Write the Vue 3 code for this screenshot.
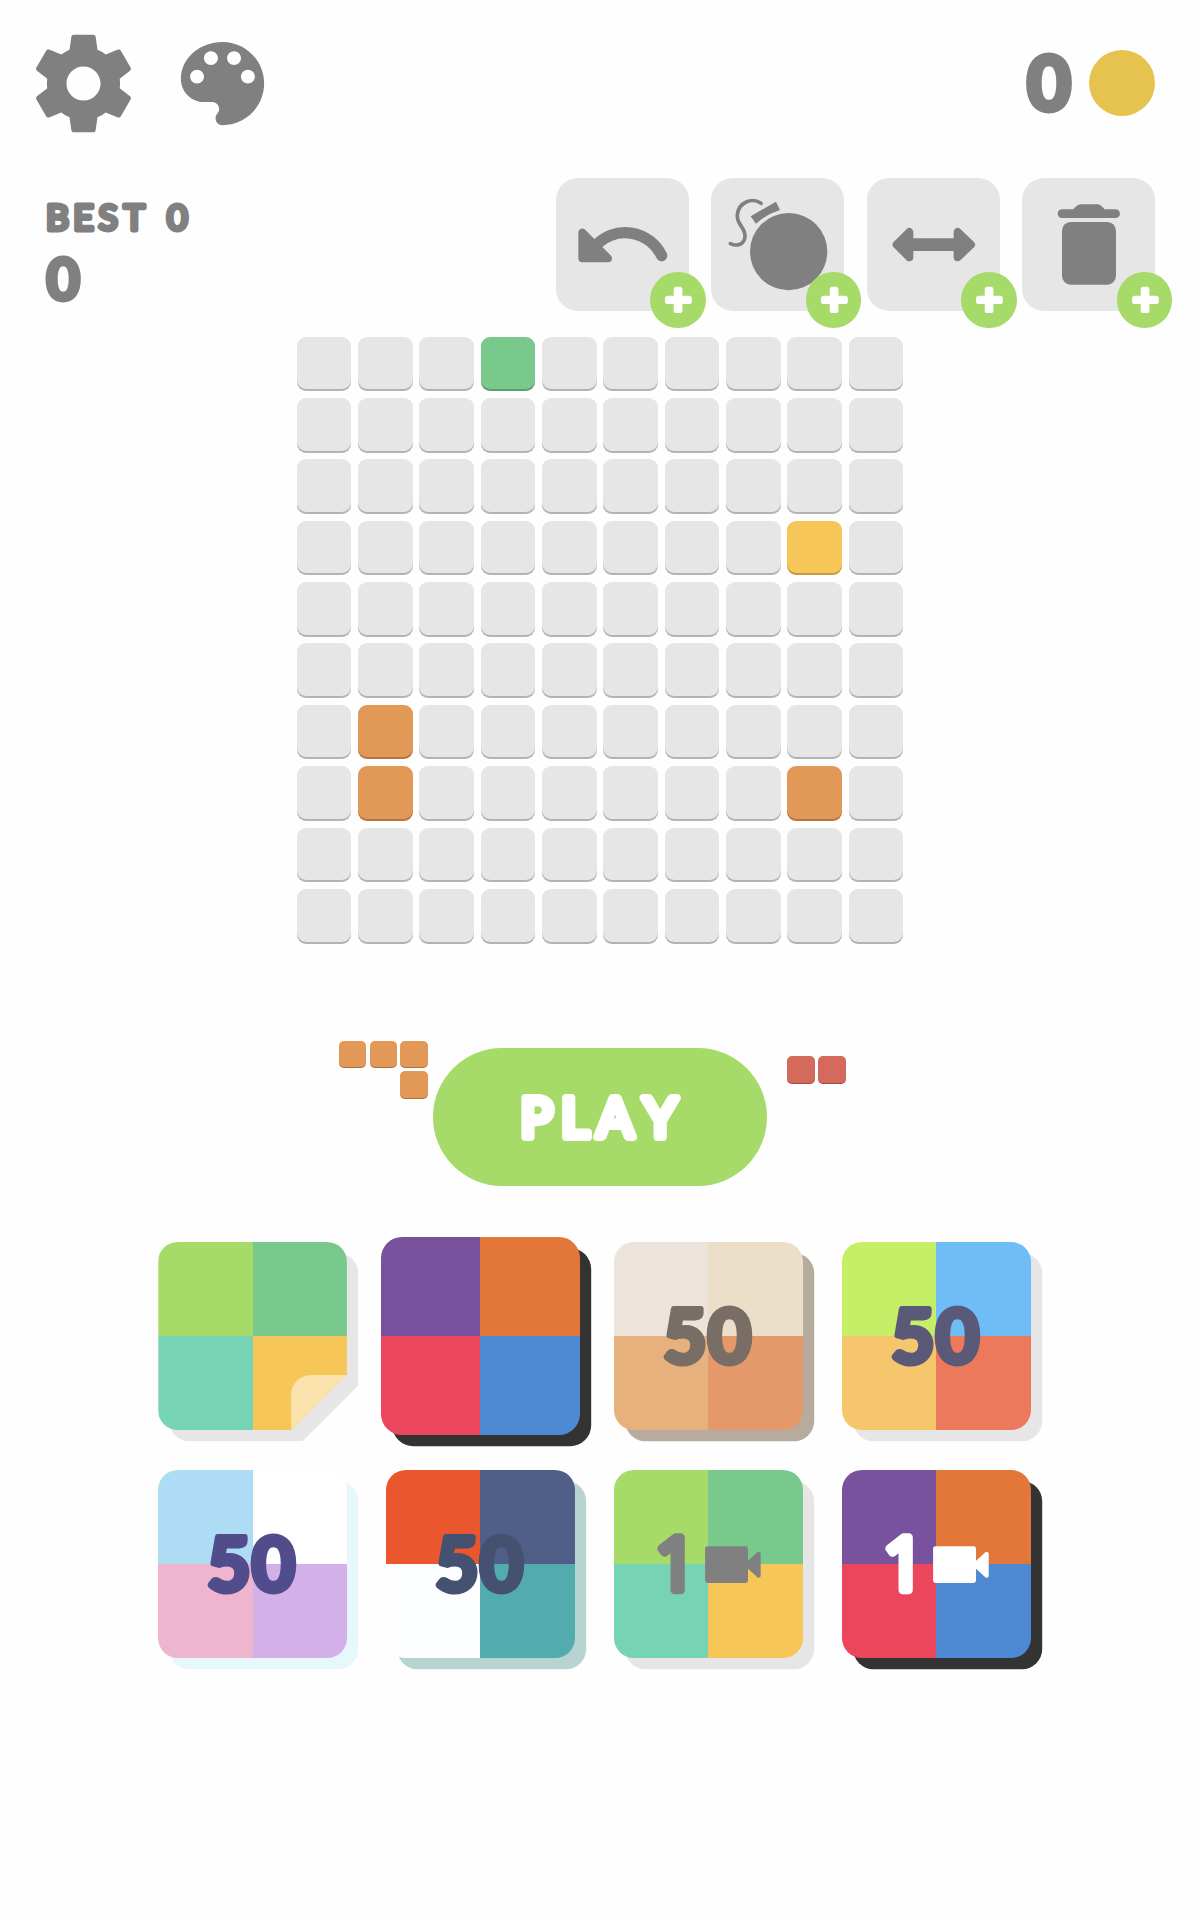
<script setup>
const tools = ['undo', 'bomb', 'swap', 'trash']

const filled = {
  '0-3': 'green',
  '3-8': 'yellow',
  '6-1': 'orange',
  '7-1': 'orange',
  '7-8': 'orange',
}

const cells = []
for (let row = 0; row < 10; row++) {
  for (let col = 0; col < 10; col++) {
    cells.push({ id: `${row}-${col}`, color: filled[`${row}-${col}`] || 'empty' })
  }
}

const classic = ['#a6da69', '#79c98c', '#76d3b3', '#f6c758']
const dark = ['#78529c', '#e37739', '#eb465c', '#4e8ad3']

const themes = [
  { id: 1, colors: classic, shadow: '#e6e6e6', folded: true },
  { id: 2, colors: dark, shadow: '#333333', selected: true },
  { id: 3, colors: ['#ece3da', '#ebdfca', '#e7b17e', '#e59869'], shadow: '#b7ab9e', text: '#786e65', price: 50 },
  { id: 4, colors: ['#c5ef67', '#6fbdf6', '#f6c66d', '#ed795c'], shadow: '#e6e6e6', text: '#5b5978', price: 50 },
  { id: 5, colors: ['#aedcf5', '#ffffff', '#efb5cf', '#d4b0e9'], shadow: '#e6f8fb', text: '#514c8c', price: 50 },
  { id: 6, colors: ['#ea572f', '#4f5f88', '#fdfeff', '#52acad'], shadow: '#b8d4d1', text: '#455170', price: 50 },
  { id: 7, colors: classic, shadow: '#e6e6e6', text: '#808080', video: 1 },
  { id: 8, colors: dark, shadow: '#333333', text: '#ffffff', video: 1 },
]
</script>

<template>
  <div class="game">
    <header class="header">
      <svg class="gear" viewBox="0 0 24 24">
        <path d="M19.43 12.98c.04-.32.07-.64.07-.98s-.03-.66-.07-.98l2.11-1.65c.19-.15.24-.42.12-.64l-2-3.46c-.12-.22-.39-.3-.61-.22l-2.49 1c-.52-.4-1.08-.73-1.69-.98l-.38-2.65C14.46 2.18 14.25 2 14 2h-4c-.25 0-.46.18-.49.42l-.38 2.65c-.61.25-1.17.59-1.69.98l-2.49-1c-.23-.09-.49 0-.61.22l-2 3.46c-.13.22-.07.49.12.64l2.11 1.65c-.04.32-.07.65-.07.98s.03.66.07.98l-2.11 1.65c-.19.15-.24.42-.12.64l2 3.46c.12.22.39.3.61.22l2.49-1c.52.4 1.08.73 1.69.98l.38 2.65c.03.24.24.42.49.42h4c.25 0 .46-.18.49-.42l.38-2.65c.61-.25 1.17-.59 1.69-.98l2.49 1c.23.09.49 0 .61-.22l2-3.46c.12-.22.07-.49-.12-.64l-2.11-1.65zM12 15.5c-1.93 0-3.5-1.57-3.5-3.5s1.57-3.5 3.5-3.5 3.5 1.57 3.5 3.5-1.57 3.5-3.5 3.5z" />
      </svg>
      <svg class="palette" viewBox="0 0 24 24">
        <path transform="matrix(-1 0 0 1 24 0)" d="M12 3c-4.97 0-9 4.03-9 9s4.03 9 9 9c.83 0 1.5-.67 1.5-1.5 0-.39-.15-.74-.39-1.01-.23-.26-.38-.61-.38-.99 0-.83.67-1.5 1.5-1.5H16c2.76 0 5-2.24 5-5 0-4.42-4.03-8-9-8zm-5.5 9c-.83 0-1.5-.67-1.5-1.5S5.67 9 6.5 9 8 9.67 8 10.5 7.33 12 6.5 12zm3-4C8.67 8 8 7.33 8 6.5S8.67 5 9.5 5s1.5.67 1.5 1.5S10.33 8 9.5 8zm5 0c-.83 0-1.5-.67-1.5-1.5S13.67 5 14.5 5s1.5.67 1.5 1.5S15.33 8 14.5 8zm3 4c-.83 0-1.5-.67-1.5-1.5S16.67 9 17.5 9s1.5.67 1.5 1.5-.67 1.5-1.5 1.5z" />
      </svg>
      <svg class="coins label" viewBox="0 0 60 120">
        <text class="bold" x="29" y="87.3" font-size="75" stroke-width="6">0</text>
      </svg>
      <span class="coin"></span>
    </header>

    <section class="status">
      <svg class="score label" viewBox="0 0 180 150">
        <text x="21.5 47.5 72.2 98.2 120 141.2" y="51.8" font-size="35.5" stroke-width="4.8">BEST 0</text>
        <text class="bold" x="27.3" y="121.6" font-size="57.5" stroke-width="4.8">0</text>
      </svg>
      <div class="tools">
        <button v-for="tool in tools" :key="tool" class="tool">
          <svg class="tool-icon" viewBox="0 0 400 400">
            <g v-if="tool === 'undo'">
              <path class="round" d="M79 164V241H156Z" />
              <path class="line" stroke-width="34" d="M118 204A121 121 0 0 1 317 233" />
            </g>
            <g v-else-if="tool === 'bomb'">
              <circle cx="233" cy="221" r="116" />
              <path d="M119 115L195 71L207 96Q166 109 135 137Z" />
              <path class="line" stroke-width="11" d="M150 76C123 57 83 73 79 110C76 140 104 148 102 176C100 200 78 206 58 197" />
            </g>
            <g v-else-if="tool === 'swap'">
              <path class="round" d="M127 162V238L89 200Z" />
              <path class="round" d="M272 162V238L312 200Z" />
              <path d="M130 181H270V219H130Z" />
            </g>
            <g v-else>
              <path d="M120 94H154Q167 79 176 79H226Q235 79 248 94H281A13 13 0 0 1 281 120H120A13 13 0 0 1 120 94Z" />
              <rect x="120" y="132" width="162" height="188" rx="26" />
            </g>
          </svg>
          <svg class="badge" viewBox="0 0 166 166">
            <rect x="71" y="44" width="26" height="79" rx="8" />
            <rect x="45" y="71" width="80" height="25" rx="8" />
          </svg>
        </button>
      </div>
    </section>

    <div class="board">
      <span v-for="cell in cells" :key="cell.id" class="cell" :class="cell.color"></span>
    </div>

    <div class="play-row">
      <div class="piece corner">
        <span v-for="n in 4" :key="n" class="block orange"></span>
      </div>
      <button class="play">
        <svg class="play-text label" viewBox="0 0 200 80">
          <text x="36.5 75 115 160.2" y="60.1" font-size="53.5" stroke-width="8">PLAY</text>
        </svg>
      </button>
      <div class="piece pair">
        <span v-for="n in 2" :key="n" class="block red"></span>
      </div>
    </div>

    <div class="themes">
      <div
        v-for="theme in themes"
        :key="theme.id"
        class="theme"
        :class="{ selected: theme.selected, folded: theme.folded }"
      >
        <div class="theme-shadow" :style="{ background: theme.shadow }"></div>
        <div class="swatches">
          <span v-for="(color, i) in theme.colors" :key="i" :style="{ background: color }"></span>
        </div>
        <div v-if="theme.folded" class="fold"></div>
        <svg
          v-if="theme.text"
          class="price label"
          viewBox="0 0 189 189"
          :style="{ fill: theme.text, stroke: theme.text }"
        >
          <text v-if="theme.price" class="bold" x="71 115.7" y="121.6" font-size="75" stroke-width="6">{{ theme.price }}</text>
          <g v-else>
            <text class="one" x="62" y="120.6" font-size="73" stroke-width="8.5">{{ theme.video }}</text>
            <rect x="92.8" y="77.8" width="40" height="34" rx="1" stroke-width="3" />
            <path stroke-width="4" d="M133 95L145 84V106Z" />
          </g>
        </svg>
      </div>
    </div>
  </div>
</template>

<style>
body {
  background: #fefefe;
}
</style>

<style scoped>
.game {
  width: 1200px;
  height: 1920px;
  overflow: hidden;
  font-family: Lato, 'Open Sans', sans-serif;
}

svg {
  display: block;
  fill: #808080;
}

button {
  border: none;
  padding: 0;
  cursor: pointer;
}

.label {
  stroke: #808080;
  stroke-linejoin: round;
  font-family: Lato, 'Open Sans', sans-serif;
  font-weight: 400;
  text-anchor: middle;
}

.bold {
  font-weight: 700;
}

.header {
  display: flex;
  align-items: center;
  height: 166.4px;
  padding: 0 44.6px 0 25px;
}

.gear {
  width: 117px;
  height: 117px;
}

.palette {
  width: 111px;
  height: 111px;
  margin-left: 25px;
}

.coins {
  width: 60px;
  height: 120px;
  margin-left: auto;
}

.coin {
  width: 66.6px;
  height: 66.6px;
  margin-left: 9px;
  border-radius: 50%;
  background: #e6c34f;
}

.status {
  display: flex;
  justify-content: space-between;
  height: 133.3px;
  padding: 11.4px 44.6px 0 36px;
}

.score {
  width: 180px;
  height: 150px;
}

.tools {
  display: flex;
  gap: 22.2px;
}

.tool {
  position: relative;
  width: 133.3px;
  height: 133.3px;
  border-radius: 22px;
  background: #e6e6e6;
}

.tool-icon {
  width: 133.3px;
  height: 133.3px;
}

.round {
  stroke: #808080;
  stroke-width: 24;
  stroke-linejoin: round;
}

.line {
  fill: none;
  stroke: #808080;
  stroke-linecap: round;
}

.badge {
  position: absolute;
  right: -16.6px;
  bottom: -16.6px;
  width: 55.5px;
  height: 55.5px;
  border-radius: 50%;
  background: #a6da69;
  fill: #fff;
}

.board {
  display: grid;
  grid-template-columns: repeat(10, 54.6px);
  grid-auto-rows: 54.6px;
  gap: 6.78px;
  justify-content: center;
  margin-top: 25.6px;
}

.cell {
  border-radius: 9px;
  box-shadow: inset 0 -2px 0 rgba(0, 0, 0, 0.22);
}

.empty {
  background: #e6e6e6;
}

.green {
  background: #79c98c;
}

.yellow {
  background: #f6c758;
}

.orange {
  background: #e29857;
}

.red {
  background: #d36a5b;
}

.play-row {
  display: flex;
  align-items: flex-start;
  height: 145px;
  margin-top: 97.3px;
  padding-left: 339px;
}

.piece {
  display: grid;
  grid-auto-rows: 27.4px;
  gap: 3.3px;
}

.corner {
  grid-template-columns: repeat(3, 27.4px);
}

.corner .block:last-child {
  grid-column: 3;
}

.pair {
  grid-template-columns: repeat(2, 27.4px);
  margin: 15.4px 0 0 20.8px;
}

.block {
  border-radius: 5px;
  box-shadow: inset 0 -1px 0 rgba(0, 0, 0, 0.25);
}

.play {
  display: flex;
  align-items: center;
  justify-content: center;
  width: 333.3px;
  height: 138.3px;
  margin: 7px 0 0 5.6px;
  border-radius: 70px;
  background: #a6da69;
}

.play-text {
  width: 200px;
  height: 80px;
  fill: #fff;
  stroke: #fff;
}

.themes {
  display: grid;
  grid-template-columns: repeat(4, 188.6px);
  grid-auto-rows: 188.6px;
  gap: 39.3px;
  margin-top: 56px;
  padding-left: 158.3px;
}

.theme {
  --cut: none;
  display: grid;
}

.theme > * {
  grid-area: 1 / 1;
}

.theme-shadow,
.swatches {
  border-radius: 20px;
  clip-path: var(--cut);
}

.theme-shadow {
  transform: translate(11.2px, 11.2px);
}

.swatches {
  display: grid;
  grid-template-columns: 1fr 1fr;
  overflow: hidden;
  z-index: 1;
}

.selected {
  margin: -5px;
}

.selected .theme-shadow,
.selected .swatches {
  border-radius: 21px;
}

.folded {
  --cut: polygon(0 0, 100% 0, 100% 70.4%, 70.4% 100%, 0 100%);
}

.fold {
  place-self: end;
  width: 55.8px;
  height: 55.8px;
  border-top-left-radius: 20px;
  background: #f9e2ac;
  clip-path: polygon(0 0, 100% 0, 0 100%);
  z-index: 2;
}

.price {
  width: 188.6px;
  height: 188.6px;
  z-index: 2;
}

.one {
  font-family: 'Open Sans', sans-serif;
}
</style>
